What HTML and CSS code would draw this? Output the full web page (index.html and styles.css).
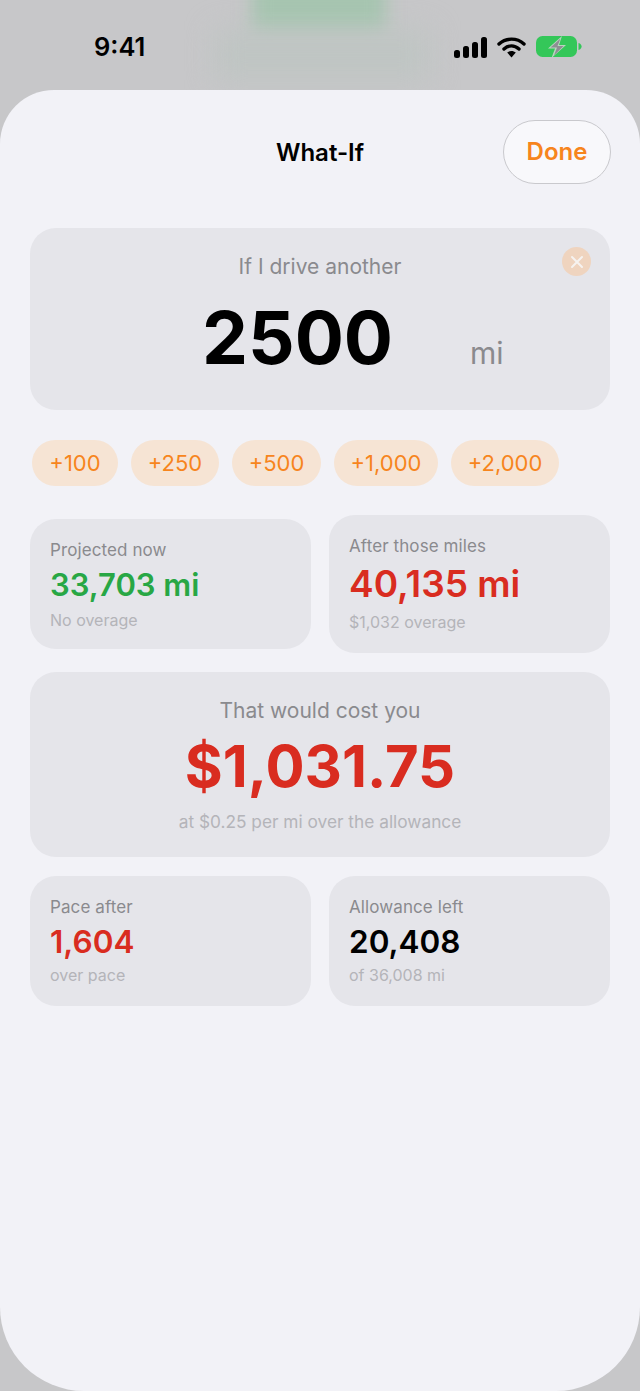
FILE: index.html
```html
<!DOCTYPE html>
<html lang="en">
<head>
    <meta charset="UTF-8">
    <title>What-If</title>
    <link rel="stylesheet" href="styles.css">
</head>
<body>
    <div class="backdrop-glow"></div>
    <div class="backdrop-haze"></div>

    <div class="status-bar">
        <span class="time">9:41</span>
        <div class="status-icons">
            <svg width="33" height="21" viewBox="0 0 33 21">
                <rect x="0" y="13" width="6" height="8" rx="2.5" fill="#000"/>
                <rect x="9" y="9" width="6" height="12" rx="2.5" fill="#000"/>
                <rect x="18" y="5" width="6" height="16" rx="2.5" fill="#000"/>
                <rect x="27" y="0" width="6" height="21" rx="2.5" fill="#000"/>
            </svg>
            <svg width="29" height="22" viewBox="0 0 29 22">
                <path d="M2 8 C9 1.5 20 1.5 27 8" fill="none" stroke="#000" stroke-width="3.4" stroke-linecap="round"/>
                <path d="M7 13 C11.5 8.8 17.5 8.8 22 13" fill="none" stroke="#000" stroke-width="3.4" stroke-linecap="round"/>
                <path d="M10.2 16.6 C12.8 14.4 16.2 14.4 18.8 16.6 L14.5 21.5 Z" fill="#000"/>
            </svg>
            <svg width="46" height="22" viewBox="0 0 46 22">
                <rect x="0" y="0" width="41" height="21" rx="6.5" fill="#34c759"/>
                <path d="M42.5 7 C44.6 7.6 45.6 9 45.6 10.5 C45.6 12 44.6 13.4 42.5 14 Z" fill="#34c759"/>
                <path d="M26 0 L12 12.5 H19 L15.5 22 L30 9 H23 Z" fill="#b9d6c0"/>
                <path d="M24.5 2.5 L14.5 11.5 H21 L18 19.5 L27.5 10 H21.5 Z" fill="#8e8e93"/>
            </svg>
        </div>
    </div>

    <div class="sheet">
        <div class="sheet-head">
            <h1 class="sheet-title">What-If</h1>
            <div class="done-btn">Done</div>
        </div>

        <div class="card hero">
            <div class="clear-btn">
                <svg width="14" height="14" viewBox="0 0 14 14">
                    <path d="M2 2 L12 12 M12 2 L2 12" stroke="#f6f3f0" stroke-width="2" stroke-linecap="round"/>
                </svg>
            </div>
            <div class="hero-label">If I drive another</div>
            <div class="hero-input">
                <span class="hero-num">2500</span>
                <span class="hero-unit">mi</span>
            </div>
        </div>

        <div class="chips">
            <div class="chip chip-100">+100</div>
            <div class="chip chip-250">+250</div>
            <div class="chip chip-500">+500</div>
            <div class="chip chip-1000">+1,000</div>
            <div class="chip chip-2000">+2,000</div>
        </div>

        <div class="stat-row compare">
            <div class="card stat">
                <div class="stat-label">Projected now</div>
                <div class="stat-value green">33,703 mi</div>
                <div class="stat-note">No overage</div>
            </div>
            <div class="card stat stat-big">
                <div class="stat-label">After those miles</div>
                <div class="stat-value red">40,135 mi</div>
                <div class="stat-note">$1,032 overage</div>
            </div>
        </div>

        <div class="card cost">
            <div class="cost-label">That would cost you</div>
            <div class="cost-value">$1,031.75</div>
            <div class="cost-note">at $0.25 per mi over the allowance</div>
        </div>

        <div class="stat-row pace">
            <div class="card stat">
                <div class="stat-label">Pace after</div>
                <div class="stat-value red">1,604</div>
                <div class="stat-note">over pace</div>
            </div>
            <div class="card stat">
                <div class="stat-label">Allowance left</div>
                <div class="stat-value">20,408</div>
                <div class="stat-note">of 36,008 mi</div>
            </div>
        </div>
    </div>
</body>
</html>
```

FILE: styles.css
```css
html,body{margin:0;padding:0;}
body{
    position:relative;
    width:640px;
    height:1391px;
    overflow:hidden;
    background-color:#c7c7c9;
    font-family:Inter,"Liberation Sans",sans-serif;
    color:#000;
}

/* blurred content of the page under the sheet */
.backdrop-glow{
    position:absolute;
    top:-20px;
    left:252px;
    width:134px;
    height:54px;
    background-color:#a6c5b0;
    filter:blur(9px);
}
.backdrop-haze{
    position:absolute;
    top:30px;
    left:215px;
    width:215px;
    height:50px;
    background-color:#bfc5c3;
    filter:blur(14px);
}

.status-bar{
    position:relative;
    display:flex;
    justify-content:space-between;
    align-items:center;
    height:90px;
    padding:4px 58px 0 94px;
    box-sizing:border-box;
}
.time{
    font-size:25.5px;
    font-weight:600;
    line-height:28px;
}
.status-icons{
    display:flex;
    align-items:center;
    gap:10px;
}

.sheet{
    position:relative;
    height:1301px;
    padding:0 30px;
    box-sizing:border-box;
    background-color:#f2f2f7;
    border-radius:54px 54px 84px 84px;
}
.sheet-head{
    display:grid;
    grid-template-columns:1fr auto 1fr;
    align-items:center;
    height:138px;
    box-sizing:border-box;
}
.sheet-title{
    grid-column:2;
    margin:0 0 13px;
    font-size:24px;
    font-weight:600;
    line-height:28px;
}
.done-btn{
    grid-column:3;
    justify-self:end;
    width:108px;
    height:64px;
    margin:0 -1px 14px 0;
    box-sizing:border-box;
    border:1px solid #c9c9cd;
    border-radius:32px;
    background-color:#f8f8fb;
    color:#f7851d;
    font-size:24px;
    font-weight:600;
    line-height:62px;
    text-align:center;
}

.card{
    background-color:#e5e5ea;
    border-radius:26px;
    box-sizing:border-box;
}

.hero{
    position:relative;
    height:182px;
    padding-top:24px;
    text-align:center;
}
.clear-btn{
    position:absolute;
    top:19px;
    right:19px;
    display:flex;
    align-items:center;
    justify-content:center;
    width:29px;
    height:29px;
    border-radius:50%;
    background-color:#efd4bf;
}
.hero-label{
    font-size:21px;
    line-height:30px;
    color:#8a8a8e;
}
.hero-input{
    display:flex;
    align-items:baseline;
    margin-top:20px;
    padding-left:172px;
}
.hero-num{
    width:268px;
    text-align:left;
    font-size:73px;
    font-weight:700;
    line-height:72px;
}
.hero-unit{
    font-size:30px;
    color:#8a8a8e;
}

.chips{
    display:flex;
    gap:13px;
    margin:30px 0 0 2px;
}
.chip{
    height:46px;
    border-radius:23px;
    background-color:#f6e4d4;
    color:#f7851d;
    font-size:22px;
    line-height:46px;
    text-align:center;
}
.chip-100{width:86px;}
.chip-250{width:88px;}
.chip-500{width:89px;}
.chip-1000{width:104px;}
.chip-2000{width:108px;}

.stat-row{
    display:grid;
    grid-template-columns:281px 281px;
    gap:18px;
    align-items:center;
    margin-top:19px;
}
.compare{
    margin-top:29px;
}
.stat{
    height:130px;
    padding:20px 20px 0;
}
.stat-big{
    height:138px;
}
.stat-label{
    font-size:17px;
    line-height:22px;
    letter-spacing:.1px;
    color:#8a8a8e;
}
.stat-value{
    margin-top:4px;
    font-size:31px;
    font-weight:600;
    line-height:40px;
}
.stat-big .stat-value{
    margin-top:5px;
    font-size:37px;
    line-height:44px;
}
.stat-note{
    margin-top:4px;
    font-size:16px;
    line-height:22px;
    color:#b4b4b9;
}
.stat-big .stat-note{
    margin-top:5px;
}
.pace .stat-note{
    margin-top:2px;
}
.pace .stat-value{
    font-size:31.5px;
}
.green{color:#28a745;}
.red{color:#d92c20;}

.cost{
    height:185px;
    margin-top:19px;
    padding-top:24px;
    text-align:center;
}
.cost-label{
    font-size:21px;
    line-height:30px;
    color:#8a8a8e;
}
.cost-value{
    margin-top:9px;
    font-size:58px;
    font-weight:700;
    line-height:62px;
    color:#d92c20;
}
.cost-note{
    margin-top:13px;
    font-size:17.3px;
    line-height:24px;
    color:#b4b4b9;
}
```
